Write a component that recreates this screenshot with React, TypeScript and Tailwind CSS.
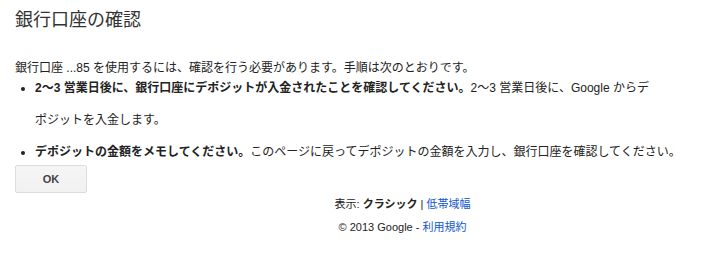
const font = { fontFamily: '"Liberation Sans", Arial, "Noto Sans CJK JP", sans-serif' };

export default function App() {
  return (
    <div
      className="min-h-[258px] w-[714px] bg-white px-[15px] text-[12px] text-[#222]"
      style={font}
    >
      {/* Title */}
      <h1 className="pt-[9px] text-[18px] font-normal leading-[22px] text-[#333]">
        銀行口座の確認
      </h1>

      {/* Body */}
      <p className="mt-[29px] leading-[16px]">
        銀行口座 ...85 を使用するには、確認を行う必要があります。手順は次のとおりです。
      </p>
      <ul className="-mt-[4px] w-[684px] list-disc pl-[20px] leading-[32px]">
        <li>
          <b>2〜3 営業日後に、銀行口座にデポジットが入金されたことを確認してください。</b>
          2〜3 営業日後に、Google からデ
          <br />
          ポジットを入金します。
        </li>
        <li>
          <b>デポジットの金額をメモしてください。</b>
          このページに戻ってデポジットの金額を入力し、銀行口座を確認してください。
        </li>
      </ul>

      <button className="mt-[-3px] flex h-[28px] w-[72px] items-center justify-center rounded-[2px] border border-[#dcdcdc] bg-gradient-to-b from-[#f5f5f5] to-[#f1f1f1] text-[11px] font-bold text-[#444]">
        OK
      </button>

      {/* Footer */}
      <div className="mt-0 flex flex-col items-center pl-[91px] text-[11px] leading-[23px]">
        <div>
          表示: <b>クラシック</b> | <a className="text-[#15c]">低帯域幅</a>
        </div>
        <div>
          © 2013 Google - <a className="text-[#15c]">利用規約</a>
        </div>
      </div>
    </div>
  );
}
